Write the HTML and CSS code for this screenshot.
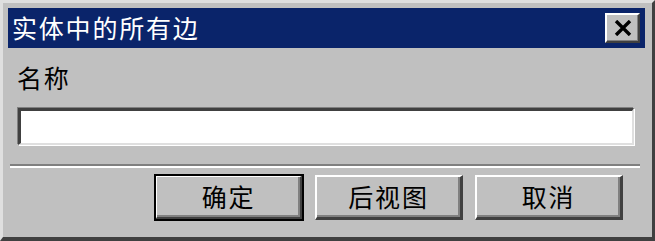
FILE: index.html
```html
<!DOCTYPE html>
<html lang="zh-CN">
<head>
    <meta charset="utf-8">
    <title>实体中的所有边</title>
    <link rel="stylesheet" href="styles.css">
</head>
<body>
    <div class="dialog">
        <div class="title-bar">
            <span class="title-text">实体中的所有边</span>
            <button type="button" class="close-btn">
                <svg width="18" height="16" viewBox="0 0 18 16">
                    <path d="M2 1 L16 15 M16 1 L2 15" stroke="#000" stroke-width="3.4"/>
                </svg>
            </button>
        </div>

        <div class="dialog-body">
            <label class="field-label" for="name">名称</label>
            <input type="text" id="name" class="field-input">
        </div>

        <div class="separator"></div>

        <div class="button-row">
            <button type="button" class="btn btn-default"><span>确定</span></button>
            <button type="button" class="btn"><span>后视图</span></button>
            <button type="button" class="btn"><span>取消</span></button>
        </div>
    </div>
</body>
</html>
```

FILE: styles.css
```css
body {
    margin: 0;
    padding: 0;
    background-color: #c0c0c0;
    font-family: "Noto Sans CJK SC", "DejaVu Sans", sans-serif;
}

.dialog {
    width: 655px;
    height: 241px;
    box-sizing: border-box;
    background-color: #c0c0c0;
    border-top: 3px solid #dfdfdf;
    border-left: 3px solid #dfdfdf;
    border-right: 3px solid #404040;
    border-bottom: 4px solid #404040;
    padding: 5px 7px 0 5px;
    display: flex;
    flex-direction: column;
}

.title-bar {
    height: 40px;
    background-color: #0a246a;
    display: flex;
    align-items: center;
    justify-content: space-between;
    padding: 0 5px 0 4px;
}

.title-text {
    color: #ffffff;
    font-size: 25px;
    letter-spacing: 1.8px;
    line-height: 1;
    margin-top: -2px;
}

.close-btn {
    width: 35px;
    height: 30px;
    padding: 0;
    box-sizing: border-box;
    background-color: #c0c0c0;
    border-top: 2px solid #ffffff;
    border-left: 2px solid #ffffff;
    border-right: 2px solid #404040;
    border-bottom: 2px solid #404040;
    box-shadow: inset -1px -1px 0 #808080;
    display: flex;
    align-items: center;
    justify-content: center;
}

.dialog-body {
    padding: 0 11px 0 10px;
    display: flex;
    flex-direction: column;
}

.field-label {
    font-size: 25px;
    letter-spacing: 1.8px;
    line-height: 30px;
    margin-top: 14px;
    margin-left: -1px;
    color: #000;
}

.field-input {
    height: 37px;
    margin-top: 16px;
    box-sizing: border-box;
    background-color: #ffffff;
    border-top: 3px solid #404040;
    border-left: 3px solid #404040;
    border-right: 2px solid #dfdfdf;
    border-bottom: 2px solid #dfdfdf;
    box-shadow: -1px -1px 0 #808080, 1px 1px 0 #ffffff;
    outline: none;
}

.separator {
    margin: 19px 5px 0 2px;
    height: 0;
    border-top: 2px solid #808080;
    border-bottom: 2px solid #ffffff;
}

.button-row {
    display: flex;
    justify-content: flex-end;
    gap: 12px;
    margin-top: 7px;
    padding-right: 22px;
}

.btn {
    width: 148px;
    height: 45px;
    padding: 0;
    box-sizing: border-box;
    background-color: #c0c0c0;
    font-family: inherit;
    font-size: 25px;
    letter-spacing: 1.8px;
    color: #000;
    border-top: 2px solid #ffffff;
    border-left: 2px solid #ffffff;
    border-right: 3px solid #404040;
    border-bottom: 3px solid #404040;
    box-shadow: inset -2px -2px 0 #808080;
}

.btn span {
    display: block;
    margin-top: -3px;
}

.btn-default {
    outline: 2px solid #000000;
    outline-offset: -1px;
}
```
